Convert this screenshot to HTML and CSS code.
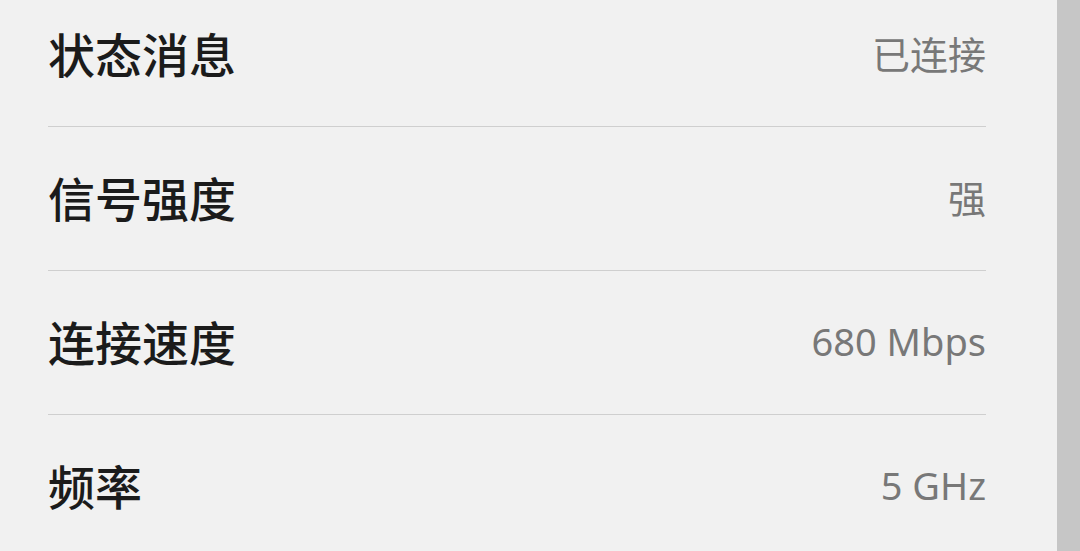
FILE: index.html
```html
<!DOCTYPE html>
<html lang="zh-CN">
<head>
    <meta charset="UTF-8">
    <meta name="viewport" content="width=device-width, initial-scale=1.0">
    <title>网络详情</title>
    <link rel="stylesheet" href="styles.css">
</head>
<body>
    <div class="page">
        <ul class="info-list">
            <li class="info-row">
                <span class="label">状态消息</span>
                <span class="value">已连接</span>
            </li>
            <li class="info-row">
                <span class="label">信号强度</span>
                <span class="value">强</span>
            </li>
            <li class="info-row">
                <span class="label">连接速度</span>
                <span class="value">680 Mbps</span>
            </li>
            <li class="info-row">
                <span class="label">频率</span>
                <span class="value">5 GHz</span>
            </li>
        </ul>
    </div>
    <div class="scroll-edge"></div>
</body>
</html>
```

FILE: styles.css
```css
html,
body {
    height: 100%;
}

body {
    margin: 0;
    display: flex;
    overflow: hidden;
    background-color: #f1f1f1;
    font-family: "Noto Sans", "Noto Sans CJK SC", sans-serif;
}

.page {
    flex: 1;
    padding: 0 71px 0 48px;
}

.scroll-edge {
    width: 23px;
    background-color: #c6c6c6;
}

.info-list {
    list-style: none;
    margin: -17px 0 0;
    padding: 0;
}

.info-row {
    display: flex;
    align-items: center;
    justify-content: space-between;
    box-sizing: border-box;
    height: 144px;
    padding-bottom: 4px;
    border-bottom: 1px solid #cfcfcf;
}

.label {
    font-size: 47px;
    font-weight: 500;
    color: #1b1b1b;
}

.value {
    font-size: 38px;
    color: #787878;
}
```
